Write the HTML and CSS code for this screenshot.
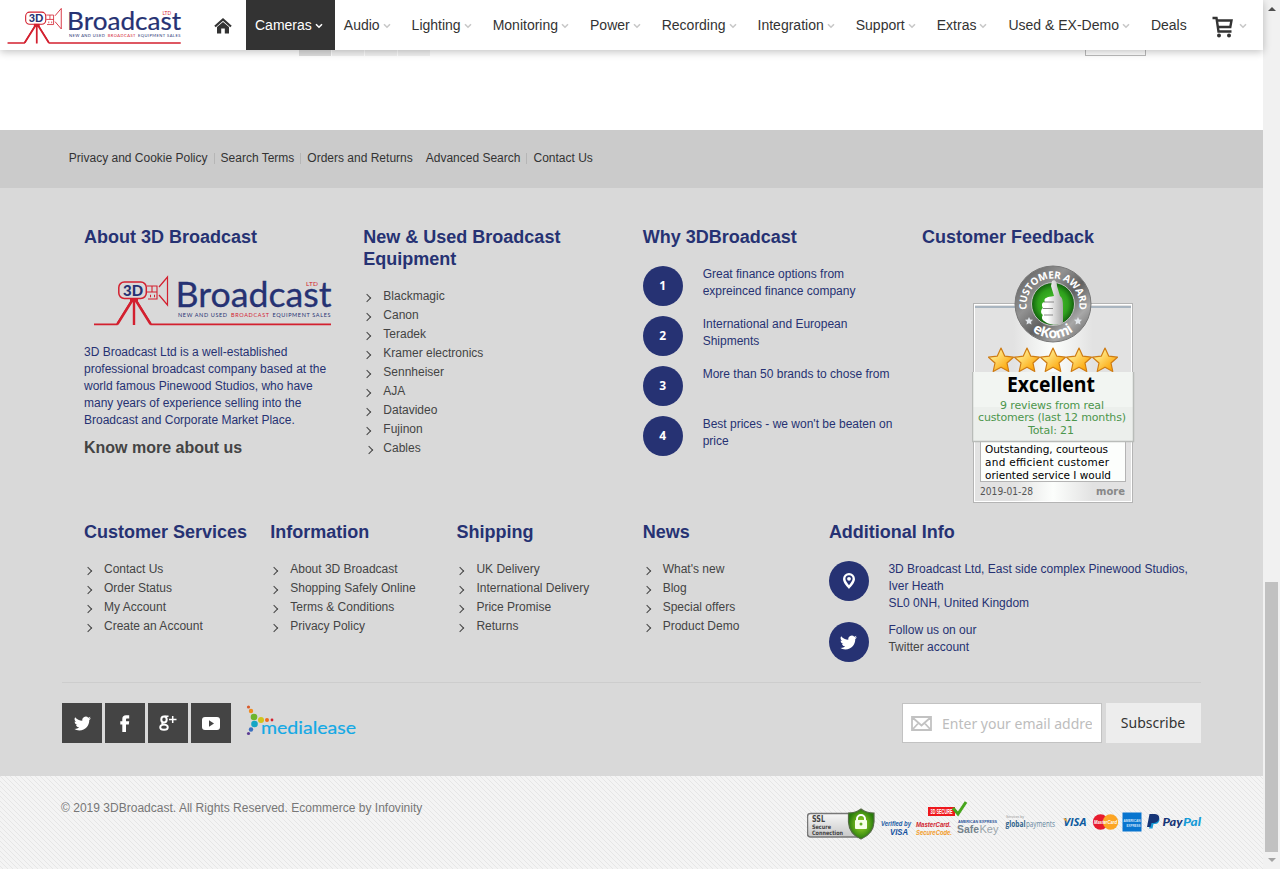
FILE: index.html
```html
<!DOCTYPE html>
<html lang="en">
<head>
<meta charset="utf-8">
<title>3D Broadcast</title>
<link rel="stylesheet" href="styles.css">
</head>
<body>
<svg class="defs" aria-hidden="true">
  <symbol id="logo" viewBox="0 0 238 52">
    <g fill="none" stroke="#d3202f">
      <path d="M0 49.3H23L38 25M42 25L57 49.3H237" stroke-width="1.8"/>
      <path d="M23.5 49L38.5 25M40 24V50M41.5 25L56.5 49" stroke-width="2.4"/>
      <rect x="24.8" y="7" width="27.5" height="16.5" rx="5.5" stroke-width="1.5"/>
      <path d="M53 11H63V24H54M53 17H63M58 11V17" stroke-width="1.1"/>
      <path d="M56 21h1M60 21h1" stroke-width="2.5"/>
      <path d="M65 12L73.5 2V30L65 20" stroke-width="1.2"/>
    </g>
    <path d="M36 23h8v4h-8z" fill="#d3202f"/>
    <text x="29" y="20.5" class="logo-3d" textLength="20" lengthAdjust="spacingAndGlyphs">3D</text>
    <text x="81.5" y="32" class="logo-name" textLength="156" lengthAdjust="spacingAndGlyphs">Broadcast</text>
    <text x="212" y="11" class="logo-ltd" textLength="12">LTD</text>
    <text x="84" y="41.500" class="logo-tag" textLength="49">NEW AND USED</text>
    <text x="137" y="41.500" class="logo-tag red" textLength="38">BROADCAST</text>
    <text x="178.500" y="41.500" class="logo-tag" textLength="58">EQUIPMENT SALES</text>
  </symbol>
  <symbol id="caret" viewBox="0 0 8 6"><path d="M1 1.2L4 4.2L7 1.2" fill="none" stroke="currentColor" stroke-width="1.600"/></symbol>
  <symbol id="twitter" viewBox="0 0 24 24"><path fill="currentColor" d="M23.950 4.570a10 10 0 0 1-2.820.77 4.960 4.960 0 0 0 2.160-2.720c-.95.55-2 .95-3.130 1.180a4.920 4.920 0 0 0-8.380 4.480C7.690 8.090 4.070 6.130 1.640 3.160a4.920 4.920 0 0 0 1.520 6.570 4.900 4.900 0 0 1-2.230-.61v.06a4.920 4.920 0 0 0 3.950 4.830 5 5 0 0 1-2.210.08 4.940 4.940 0 0 0 4.600 3.420A9.870 9.870 0 0 1 0 19.540a14 14 0 0 0 7.550 2.210c9.050 0 14-7.500 14-13.980 0-.21 0-.42-.02-.63a9.940 9.940 0 0 0 2.420-2.570z"/></symbol>
  <symbol id="star" viewBox="0 0 26 26"><path d="M13 1L16.800 9.200L25.500 10.200L19 16L20.800 24.500L13 20.200L5.200 24.500L7 16L0.500 10.200L9.200 9.200Z" fill="url(#gold)" stroke="#ce7c14" stroke-width="1.200" stroke-linejoin="round"/></symbol>
  <linearGradient id="gold" x1="0" y1="0" x2="1" y2="1"><stop offset="0.15" stop-color="#fff5a0"/><stop offset="0.8" stop-color="#fda90f"/></linearGradient>
</svg>

<div class="page">
  <header class="header">
    <a class="brand" href="#"><svg width="175" height="38"><use href="#logo"/></svg></a>
    <a class="home" href="#"><svg width="18" height="16" viewBox="0 0 18 16"><path d="M1 8.500L9 1.500L17 8.500" fill="none" stroke="#333" stroke-width="2.200"/><path d="M3 9L9 4L15 9V15.500H10.800V10.500H7.200V15.500H3Z" fill="#333"/></svg></a>
    <nav class="nav">
      <a class="active" href="#">Cameras<svg><use href="#caret"/></svg></a>
      <a href="#">Audio<svg><use href="#caret"/></svg></a>
      <a href="#">Lighting<svg><use href="#caret"/></svg></a>
      <a href="#">Monitoring<svg><use href="#caret"/></svg></a>
      <a href="#">Power<svg><use href="#caret"/></svg></a>
      <a href="#">Recording<svg><use href="#caret"/></svg></a>
      <a href="#">Integration<svg><use href="#caret"/></svg></a>
      <a href="#">Support<svg><use href="#caret"/></svg></a>
      <a href="#">Extras<svg><use href="#caret"/></svg></a>
      <a href="#">Used &amp; EX-Demo<svg><use href="#caret"/></svg></a>
      <a href="#">Deals</a>
    </nav>
    <a class="cart" href="#"><svg class="cart-icon" width="22" height="22" viewBox="0 0 22 22"><path d="M0.500 2H4.500L6.500 15.500H19.500" fill="none" stroke="#333" stroke-width="2.400"/><path d="M5 4.500H19.500L18.300 11H6" fill="none" stroke="#333" stroke-width="2.400"/><circle cx="7" cy="19.500" r="2" fill="#333"/><circle cx="17" cy="19.500" r="2" fill="#333"/></svg><svg class="cart-caret"><use href="#caret"/></svg></a>
  </header>

  <main class="listing">
    <div class="pager"><span class="current"></span><span></span><span></span><span></span></div>
    <div class="limiter"></div>
  </main>

  <div class="quick-links">
    <a href="#">Privacy and Cookie Policy</a><a href="#">Search Terms</a><a href="#" class="last">Orders and Returns</a><a href="#">Advanced Search</a><a href="#" class="last">Contact Us</a>
  </div>

  <footer class="footer">
    <div class="row row-top">
      <section>
        <h3>About 3D Broadcast</h3>
        <svg class="about-logo" width="238" height="52"><use href="#logo"/></svg>
        <p>3D Broadcast Ltd is a well-established<br>professional broadcast company based at the<br>world famous Pinewood Studios, who have<br>many years of experience selling into the<br>Broadcast and Corporate Market Place.</p>
        <a class="more" href="#">Know more about us</a>
      </section>
      <section>
        <h3>New &amp; Used Broadcast<br>Equipment</h3>
        <ul class="links">
          <li>Blackmagic</li><li>Canon</li><li>Teradek</li><li>Kramer electronics</li><li>Sennheiser</li><li>AJA</li><li>Datavideo</li><li>Fujinon</li><li class="shift">Cables</li>
        </ul>
      </section>
      <section>
        <h3>Why 3DBroadcast</h3>
        <div class="reasons">
          <div class="item"><b class="disc">1</b><p>Great finance options from<br>expreinced finance company</p></div>
          <div class="item"><b class="disc">2</b><p>International and European<br>Shipments</p></div>
          <div class="item"><b class="disc">3</b><p>More than 50 brands to chose from</p></div>
          <div class="item"><b class="disc">4</b><p>Best prices - we won't be beaten on<br>price</p></div>
        </div>
      </section>
      <section>
        <h3>Customer Feedback</h3>
        <svg class="ekomi" width="164" height="240" viewBox="0 0 164 240">
          <defs>
            <linearGradient id="sheen"><stop offset="0.250" stop-color="#e2e2e2"/><stop offset="0.500" stop-color="#fcfefc"/><stop offset="0.750" stop-color="#e2e2e2"/></linearGradient>
            <linearGradient id="ring" x1="0" y1="0" x2="1" y2="1"><stop offset="0" stop-color="#555"/><stop offset="0.350" stop-color="#929292"/><stop offset="0.550" stop-color="#606060"/><stop offset="0.750" stop-color="#a8a8a8"/><stop offset="1" stop-color="#555"/></linearGradient>
            <radialGradient id="green"><stop offset="0" stop-color="#4cc92e"/><stop offset="0.700" stop-color="#2e9f1c"/><stop offset="1" stop-color="#12600e"/></radialGradient>
            <linearGradient id="hand"><stop offset="0.300" stop-color="#fff"/><stop offset="1" stop-color="#aaa"/></linearGradient>
            <path id="arc-top" d="M55 45A26.500 26.500 0 1 1 107 45"/>
            <path id="arc-bottom" d="M47 39A34 34 0 0 0 115 39"/>
          </defs>
          <rect x="1.500" y="38.500" width="159" height="199" fill="url(#sheen)" stroke="#b4b4b4"/>
          <rect x="2.500" y="39.500" width="157" height="197" fill="none" stroke="#fff"/>
          <path d="M3 42H159" stroke="#a9b5c0" stroke-width="2"/>
          <circle cx="81" cy="39" r="38" fill="url(#ring)" stroke="#777"/>
          <circle cx="81" cy="39" r="21.500" fill="url(#green)" stroke="#c3c3c3"/>
          <path d="M80 16C83 14 85 17 85 21L88 31C91 33 91 38 91 43V57C91 60 81 61 75 58L72 56C69 54 70 51 71 50C68 48 69 44 71 43C69 40 70 37 73 37C71 33 75 32 82 31L79 21Z" fill="url(#hand)"/>
          <path d="M72 37H82M71 43.500H81M72 50H81" stroke="#888"/>
          <text class="award"><textPath href="#arc-top" startOffset="50%" text-anchor="middle">CUSTOMER AWARD</textPath></text>
          <text class="ekomi-name"><textPath href="#arc-bottom" startOffset="50%" text-anchor="middle">eKomi</textPath></text>
          <path d="M57 52l1.200 2.500 2.800.3-2 2 .5 2.800-2.500-1.300-2.500 1.300.5-2.800-2-2 2.800-.3zM106 52l1.200 2.500 2.800.3-2 2 .5 2.800-2.500-1.300-2.500 1.300.5-2.800-2-2 2.800-.3z" fill="#e0e5ea"/>
          <use href="#star" x="16" y="82" width="26" height="26"/><use href="#star" x="42" y="82" width="26" height="26"/><use href="#star" x="68" y="82" width="26" height="26"/><use href="#star" x="94" y="82" width="26" height="26"/><use href="#star" x="120" y="82" width="26" height="26"/>
          <rect x="8.500" y="170" width="145" height="46.500" fill="#fcfefc" stroke="#b4b4b4"/>
          <rect x="0.500" y="107" width="161" height="70" fill="#f2f5f2"/>
          <rect x="1" y="142" width="160" height="34" fill="#ecefec"/>
          <path d="M0.500 107V176.500H161.500V107" fill="none" stroke="#b9bcb9" stroke-width="1.500"/>
          <text class="rating" x="35" y="127" textLength="88" lengthAdjust="spacingAndGlyphs">Excellent</text>
          <g class="reviews"><text x="28" y="144" textLength="104">9 reviews from real</text><text x="6" y="156" textLength="148">customers (last 12 months)</text><text x="56" y="169" textLength="46">Total: 21</text></g>
          <g class="quote"><text x="13" y="188" textLength="123">Outstanding, courteous</text><text x="13" y="201" textLength="124">and efficient customer</text><text x="13" y="214" textLength="126">oriented service I would</text></g>
          <text class="date" x="8" y="230" textLength="53" lengthAdjust="spacingAndGlyphs">2019-01-28</text><text class="readmore" x="124" y="230" textLength="29" lengthAdjust="spacingAndGlyphs">more</text>
        </svg>
      </section>
    </div>

    <div class="row row-bottom">
      <section><h3>Customer Services</h3><ul class="links"><li>Contact Us</li><li>Order Status</li><li>My Account</li><li>Create an Account</li></ul></section>
      <section><h3>Information</h3><ul class="links"><li>About 3D Broadcast</li><li>Shopping Safely Online</li><li>Terms &amp; Conditions</li><li>Privacy Policy</li></ul></section>
      <section><h3>Shipping</h3><ul class="links"><li>UK Delivery</li><li>International Delivery</li><li>Price Promise</li><li>Returns</li></ul></section>
      <section><h3>News</h3><ul class="links"><li>What's new</li><li>Blog</li><li>Special offers</li><li>Product Demo</li></ul></section>
      <section class="wide">
        <h3>Additional Info</h3>
        <div class="contact">
          <div class="item"><span class="disc"><svg width="12" height="16" viewBox="0 0 12 16"><path fill="#fff" fill-rule="evenodd" d="M6 0a6 6 0 0 0-6 6c0 3.500 3.500 7 6 10 2.500-3 6-6.500 6-10a6 6 0 0 0-6-6zm0 2.200a3.600 3.600 0 0 1 3.600 3.600c0 1.900-1.800 4.200-3.600 6.400-1.800-2.200-3.600-4.500-3.600-6.400A3.600 3.600 0 0 1 6 2.200z"/><circle cx="6" cy="5.800" r="1.900" fill="#fff"/></svg></span><p>3D Broadcast Ltd, East side complex Pinewood Studios,<br>Iver Heath<br>SL0 0NH, United Kingdom</p></div>
          <div class="item"><span class="disc"><svg width="17" height="17"><use href="#twitter"/></svg></span><p>Follow us on our<br><a href="#">Twitter</a> account</p></div>
        </div>
      </section>
    </div>

    <div class="footer-bar">
      <div class="social">
        <a href="#"><svg width="17" height="17"><use href="#twitter"/></svg></a>
        <a href="#"><svg width="10" height="17" viewBox="0 0 10 17"><path fill="#fff" d="M2.300 17V9.500H0.300V6.200H2.300V4C2.300 1.500 3.700 0.300 6 0.300H9.200V3.500H7.200C6.300 3.500 6 3.900 6 4.700V6.200H9.200L8.800 9.500H6V17Z"/></svg></a>
        <a href="#"><svg width="18" height="16" viewBox="0 0 18 16"><g fill="none" stroke="#fff"><ellipse cx="5" cy="4.500" rx="2.700" ry="3" stroke-width="2"/><path d="M5.500 1.300H9.500M4 7.300C2 8.700 3.500 9.300 5.500 9.600" stroke-width="1.500"/><ellipse cx="5" cy="12.200" rx="3.800" ry="2.600" stroke-width="1.900"/><path d="M10 4.500H17.500M13.700 1V8" stroke-width="1.500"/></g></svg></a>
        <a href="#"><svg width="18" height="13" viewBox="0 0 18 13"><rect width="18" height="13" rx="3" fill="#fff"/><path d="M7 3.200L12 6.500L7 9.800Z" fill="#444"/></svg></a>
        <svg class="medialease" width="112" height="34" viewBox="0 0 112 34">
          <circle cx="2.500" cy="2" r="1.600" fill="#d95a2b"/><circle cx="5" cy="6" r="2.200" fill="#f08b20"/><circle cx="8" cy="12" r="3.300" fill="#6cb52d"/><circle cx="15" cy="15" r="3" fill="#d0c51c"/><circle cx="21" cy="15" r="2" fill="#f06a1f"/><circle cx="26" cy="15" r="1.400" fill="#d3202f"/><circle cx="8.500" cy="19" r="3.300" fill="#14a6c5"/><circle cx="5" cy="24.500" r="2.200" fill="#3a6fc0"/><circle cx="2.500" cy="28.500" r="1.600" fill="#5b3b92"/>
          <text x="15" y="29" textLength="95" lengthAdjust="spacingAndGlyphs">medialease</text>
        </svg>
      </div>
      <form class="newsletter">
        <div class="field"><svg width="21" height="15" viewBox="0 0 21 15"><path d="M1 1H20V14H1ZM1.500 1.500L10.500 9.500L19.500 1.500M1.500 13.500L7.500 7M19.500 13.500L13.500 7" fill="none" stroke="#c2c2c2" stroke-width="1.800"/></svg><input type="text" placeholder="Enter your email address"></div>
        <button type="button">Subscribe</button>
      </form>
    </div>
  </footer>

  <div class="copyright">
    <span>© 2019 3DBroadcast. All Rights Reserved. Ecommerce by Infovinity</span>
    <svg class="payments" width="396" height="44" viewBox="0 0 396 44">
      <defs><linearGradient id="silver" x1="0" y1="0" x2="0" y2="1"><stop offset="0" stop-color="#f7f7f7"/><stop offset="1" stop-color="#c8c8c8"/></linearGradient><radialGradient id="shield"><stop offset="0" stop-color="#a5df2a"/><stop offset="1" stop-color="#287c0c"/></radialGradient></defs>
      <rect x="0.500" y="13.500" width="53" height="23.500" rx="3" fill="url(#silver)" stroke="#777" stroke-width="1.500"/>
      <g class="ssl"><text x="5" y="22" class="ssl-big" textLength="13" lengthAdjust="spacingAndGlyphs">SSL</text><text x="5" y="28.500" textLength="19" lengthAdjust="spacingAndGlyphs">Secure</text><text x="5" y="34.500" textLength="31" lengthAdjust="spacingAndGlyphs">Connection</text></g>
      <path d="M54 9Q49 13 41.500 13V22C42 31 47 36 54 39C61 36 66.500 31 67 22V13Q59 13 54 9Z" fill="url(#shield)" stroke="#566b45" stroke-width="1.200"/>
      <path d="M50 21V19a4 4 0 0 1 8 0V21" fill="none" stroke="#fff" stroke-width="2"/><rect x="48" y="20" width="12" height="9" rx="1" fill="#f6ffe9"/><circle cx="54" cy="24" r="1.500" fill="#63ad22"/>
      <g class="mark"><text x="74" y="26" fill="#225ca5" font-size="7.500" textLength="30" lengthAdjust="spacingAndGlyphs">Verified by</text><text x="83" y="34.500" fill="#12509f" font-size="9.500" textLength="18" lengthAdjust="spacingAndGlyphs">VISA</text>
      <text x="109" y="27" fill="#d1222c" font-size="8" textLength="35" lengthAdjust="spacingAndGlyphs">MasterCard.</text><text x="109" y="34.500" fill="#f39b27" font-size="8" textLength="36" lengthAdjust="spacingAndGlyphs">SecureCode.</text></g>
      <rect x="121" y="7" width="27" height="9" fill="#ee171c"/><text class="secure" x="123.500" y="14" textLength="22" lengthAdjust="spacingAndGlyphs">3D SECURE</text>
      <path d="M146 8L151 14L159 2" fill="none" stroke="#46a51c" stroke-width="3"/>
      <text class="amex-name" x="151" y="23" textLength="39" lengthAdjust="spacingAndGlyphs">AMERICAN EXPRESS</text>
      <text class="safe" x="150" y="33" textLength="22" lengthAdjust="spacingAndGlyphs">Safe</text><text class="safe key" x="172.500" y="33" textLength="19" lengthAdjust="spacingAndGlyphs">Key</text>
      <text x="199" y="18" class="services" textLength="18">Services by</text>
      <text class="global" x="198.500" y="27" textLength="20" lengthAdjust="spacingAndGlyphs">global</text><text class="global thin" x="219" y="27" textLength="29" lengthAdjust="spacingAndGlyphs">payments</text>
      <text class="visa" x="256.500" y="26" textLength="23" lengthAdjust="spacingAndGlyphs">VISA</text><path d="M256 18.500H259L260.500 22.500Z" fill="#f2a229"/>
      <circle cx="293.500" cy="22" r="7.700" fill="#e71b2e"/><circle cx="303.500" cy="22" r="7.700" fill="#fca524"/><text class="mc" x="287" y="24" textLength="23" lengthAdjust="spacingAndGlyphs">MasterCard</text>
      <rect x="315.500" y="12.500" width="19" height="19" fill="#0875cf"/><text class="amex" x="316.500" y="22" textLength="17" lengthAdjust="spacingAndGlyphs">AMERICAN</text><text class="amex" x="319.500" y="26.500" textLength="14" lengthAdjust="spacingAndGlyphs">EXPRESS</text>
      <path d="M345 17H350C354 17 353 24 348 24H346.500L345.500 28.500H342Z" fill="#179bd7"/><path d="M342.500 14H348C354.500 14 353 23 347 23H344.500L343.500 27H340Z" fill="#163577"/>
      <g class="paypal"><text x="355.500" y="26" textLength="20" lengthAdjust="spacingAndGlyphs">Pay</text><text x="376" y="26" textLength="18" lengthAdjust="spacingAndGlyphs" class="pal">Pal</text></g>
    </svg>
  </div>
</div>
<aside class="scrollbar"><i class="up"></i><div class="thumb"></div><i class="down"></i></aside>
</body>
</html>
```

FILE: styles.css
```css
* { box-sizing: border-box; }
body { margin: 0; height: 869px; display: flex; overflow: hidden; font: 12px/17px "Liberation Sans", Arial, sans-serif; color: #333; background: #fff; }
a { color: inherit; text-decoration: none; }
h3, p, ul { margin: 0; padding: 0; }
svg { display: block; flex: none; }
.defs { position: absolute; width: 0; height: 0; }
.page { width: 1263px; height: 869px; display: flex; flex-direction: column; flex: none; }

.header { height: 50px; display: flex; align-items: center; background: #fff; box-shadow: 0 2px 8px rgba(0,0,0,.24); flex: none; z-index: 2; }
.brand { padding: 1px 0 0 7px; width: 213px; }
.home { width: 33px; padding: 2px 0 0 1px; }
.nav { display: flex; height: 50px; font-size: 14px; }
.nav a { display: flex; align-items: center; padding: 0 9px; color: #333; white-space: nowrap; }
.nav svg, .cart-caret { width: 8px; height: 6px; color: #c8c8c8; margin: 2px 3px 0 3px; }
.nav .active { background: #333; color: #fff; }
.nav .active svg { color: #fff; }
.cart { display: flex; align-items: center; margin-left: 16px; }
.cart-icon { margin-top: 3px; }
.cart .cart-caret { margin-left: 5px; }

.listing { height: 80px; flex: none; display: flex; align-items: flex-start; padding-left: 299px; }
.pager { display: flex; gap: 1px; width: 786px; }
.pager span { width: 32px; height: 6px; background: #f2f2f2; }
.pager .current { background: #dedede; }
.limiter { width: 61px; height: 6px; border: 1px solid #bbb; border-top: 0; }

.quick-links { height: 58px; flex: none; background: #cbcbcb; display: flex; align-items: center; padding: 0 0 2px 68.8px; }
.quick-links a { display: flex; align-items: center; padding-right: 13px; }
.quick-links a:not(.last)::after { content: ""; width: 1px; height: 11px; margin: 0 -7px 0 6px; background: #b6b6b6; }

.footer { height: 588px; flex: none; background: #d9d9d9; padding: 38px 62px 0; color: #263273; }
.row { display: grid; padding-left: 22px; width: 1139.33px; }
.row-top { grid-template-columns: repeat(4, 1fr); height: 295px; }
.row-bottom { grid-template-columns: repeat(6, 1fr); height: 161px; }
.wide { grid-column: span 2; }
h3 { font-size: 18px; line-height: 22px; font-weight: bold; color: #263273; white-space: nowrap; }
.about-logo { margin: 27px 0 17px 10px; }
.more { display: block; font-size: 16px; line-height: 22px; font-weight: bold; color: #444; margin-top: 8px; }
.links { list-style: none; margin-top: 17px; color: #444; line-height: 19px; }
.links li { display: flex; align-items: center; white-space: nowrap; margin-left: -1px; }
.links li::before { content: ""; width: 5px; height: 5px; border: solid #444; border-width: 1px 1px 0 0; transform: rotate(45deg); margin: 3px 13px 0 2px; }
.links .shift::before { margin: 3px 11px 0 4px; }
.item { display: flex; gap: 20px; white-space: nowrap; }
.disc { width: 40px; height: 40px; border-radius: 50%; background: #263273; color: #fff; display: flex; align-items: center; justify-content: center; flex: none; font: bold 12px "Open Sans", sans-serif; }
.reasons { display: grid; gap: 10px; margin-top: 18px; }
.reasons .item { height: 40px; }
.reasons .disc { padding-bottom: 1px; }
.contact { display: grid; gap: 10px; margin-top: 18px; }
.contact a { color: #444; }
.contact p { margin-left: -0.5px; }
.ekomi { margin: 17px 0 0 50px; }

.footer-bar { border-top: 1px solid #cdcdcd; padding-top: 20px; display: flex; justify-content: space-between; width: 1139px; }
.social { display: flex; gap: 3px; }
.social a { width: 40px; height: 40px; background: #444; color: #fff; display: flex; align-items: center; justify-content: center; }
.medialease { margin: 2px 0 0 12px; }
.medialease text { font: 17.5px Lato, sans-serif; fill: #14a9e5; stroke: #14a9e5; stroke-width: .2; }
.newsletter { display: flex; gap: 4px; }
.field { width: 200px; height: 40px; border: 1px solid #c2c2c2; background: #fff; display: flex; align-items: center; padding: 0 9px 0 8px; gap: 10px; }
.field input { border: 0; padding: 0; width: 150px; outline: 0; font: 14px "Noto Sans", sans-serif; background: none; }
.field input::placeholder { color: #bdbdbd; }
.newsletter button { width: 95px; height: 40px; border: 0; padding: 0 1px 2px 0; background: #ededed; font: 14px "Noto Sans", sans-serif; color: #333; }

.copyright { flex: 1; display: flex; justify-content: space-between; align-items: flex-start; padding: 24px 60px 0 61px; color: #777; background: #f4f4f4 linear-gradient(45deg, transparent 42%, #e6e6e6 43%, #e6e6e6 57%, transparent 58%) 0 0 / 5px 5px; }
.copyright span { letter-spacing: 0.015px; }

.scrollbar { width: 17px; height: 869px; background: #f1f1f1; padding: 7px 2px 6px; display: flex; flex-direction: column; align-items: center; flex: none; }
.scrollbar i { border: 4px solid transparent; }
.scrollbar .up { border-top: 0; border-bottom: 4px solid #505050; }
.scrollbar .down { border-bottom: 0; border-top: 4px solid #a3a3a3; margin-top: 6px; }
.thumb { width: 13px; height: 270px; background: #c1c1c1; margin-top: 571px; flex: none; }

.logo-3d { font: 900 15.5px Lato, sans-serif; fill: #263273; }
.logo-name { font: 35px Lato, sans-serif; fill: #263273; stroke: #263273; stroke-width: .3; }
.logo-ltd { font: 6.500px Lato, sans-serif; fill: #d3202f; }
.logo-tag { font: 5.500px Lato, sans-serif; fill: #263273; }
.logo-tag.red { fill: #d3202f; }
.award { font: bold 10px "Open Sans", sans-serif; fill: #fff; letter-spacing: -0.2px; }
.ekomi-name { font: bold 14px "Open Sans", sans-serif; fill: #fff; }
.rating { font: bold 22px "Open Sans", sans-serif; fill: #000; }
.reviews { font: 11px "DejaVu Sans", sans-serif; fill: #4c964c; }
.quote { font: 10.500px "DejaVu Sans", sans-serif; fill: #000; }
.date { font: 10.5px "DejaVu Sans", sans-serif; fill: #555; }
.readmore { font: bold 10px "DejaVu Sans", sans-serif; fill: #888; }
.ssl { font: bold 6px "DejaVu Sans", sans-serif; fill: #444; }
.ssl-big { font-size: 8px; }
.mark { font-family: "Liberation Sans", sans-serif; font-weight: bold; font-style: italic; }
.secure { font: bold 7px "Liberation Sans", sans-serif; fill: #fff; }
.amex-name { font: bold 3.500px "Liberation Sans", sans-serif; fill: #2d579b; }
.safe { font: bold 11.5px "Liberation Sans", sans-serif; fill: #75838c; }
.safe.key { font-weight: normal; fill: #9aa5ab; }
.services { font: 3.500px "Liberation Sans", sans-serif; fill: #999; }
.global { font: bold 8.500px "Open Sans", sans-serif; fill: #30648d; }
.global.thin { font-weight: normal; fill: #6487a0; }
.visa { font: italic bold 11px "Open Sans", sans-serif; fill: #0d5ba0; }
.mc { font: italic bold 5px "Liberation Sans", sans-serif; fill: #fff; }
.amex { font: bold 4px "Liberation Sans", sans-serif; fill: #cfe6fa; }
.paypal { font: italic 900 12px Lato, sans-serif; fill: #163577; }
.pal { fill: #179bd7; }
```
